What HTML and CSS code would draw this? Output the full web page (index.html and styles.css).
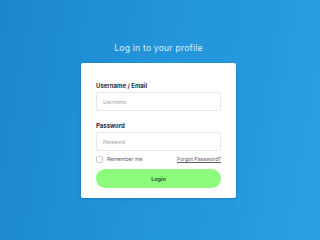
FILE: index.html
```html
<!DOCTYPE html>
<html>
<head>
<meta charset="utf-8">
<link rel="stylesheet" href="styles.css">
</head>
<body>
<main class="page">
  <h1 class="title">Log in to your profile</h1>
  <form class="card">
    <label class="label">Username / Email</label>
    <div class="input"><span class="ph">Username</span></div>
    <label class="label label-2">Password</label>
    <div class="input"><span class="ph">Password</span></div>
    <div class="row">
      <span class="check"><span class="box"></span><span class="rem">Remember me</span></span>
      <span class="forgot">Forgot Password?</span>
    </div>
    <div class="btn">Login</div>
  </form>
</main>
</body>
</html>
```
FILE: styles.css
```css
html, body { margin: 0; padding: 0; }
body {
  width: 320px; height: 240px; overflow: hidden;
  background: linear-gradient(100deg, #1b87cf 0%, #2394d9 45%, #2a9fe4 100%);
  font-family: Inter, "Open Sans", sans-serif;
}
.page {
  display: flex; flex-direction: column; align-items: center;
  padding-top: 42px; padding-right: 3px;
}
.title {
  margin: 0; font-size: 8.6px; font-weight: 400; color: #d9eeff;
  line-height: 13px; letter-spacing: 0.2px;
}
.card {
  margin-top: 8px;
  width: 125px; padding: 19px 15px 10px;
  background: #fff; border-radius: 2px;
  box-shadow: 0 1px 3px rgba(0,40,90,0.2);
  display: flex; flex-direction: column;
}
.label {
  font-size: 6px; font-weight: 700; color: #2a2f3a; line-height: 8px;
  margin-bottom: 2px;
}
.label-2 { margin-top: 11px; }
.input {
  height: 17px; border: 1px solid #e4e7f0; border-radius: 2px;
  display: flex; align-items: center; padding-left: 6px;
}
.ph { font-size: 4.8px; color: #9aa0ad; }
.row {
  display: flex; justify-content: space-between; align-items: center;
  margin-top: 4px; height: 8px;
}
.check { display: flex; align-items: center; gap: 4px; }
.box {
  width: 5px; height: 5px; border: 1px solid #c9ccd6; border-radius: 2px;
}
.rem { font-size: 5.2px; color: #5b606b; }
.forgot { font-size: 5.2px; color: #5b606b; text-decoration: underline; }
.btn {
  margin-top: 6px; height: 19px; border-radius: 10px;
  background: #8dfc7d; color: #263238;
  font-size: 5.4px; font-weight: 600;
  display: flex; align-items: center; justify-content: center;
}
```
